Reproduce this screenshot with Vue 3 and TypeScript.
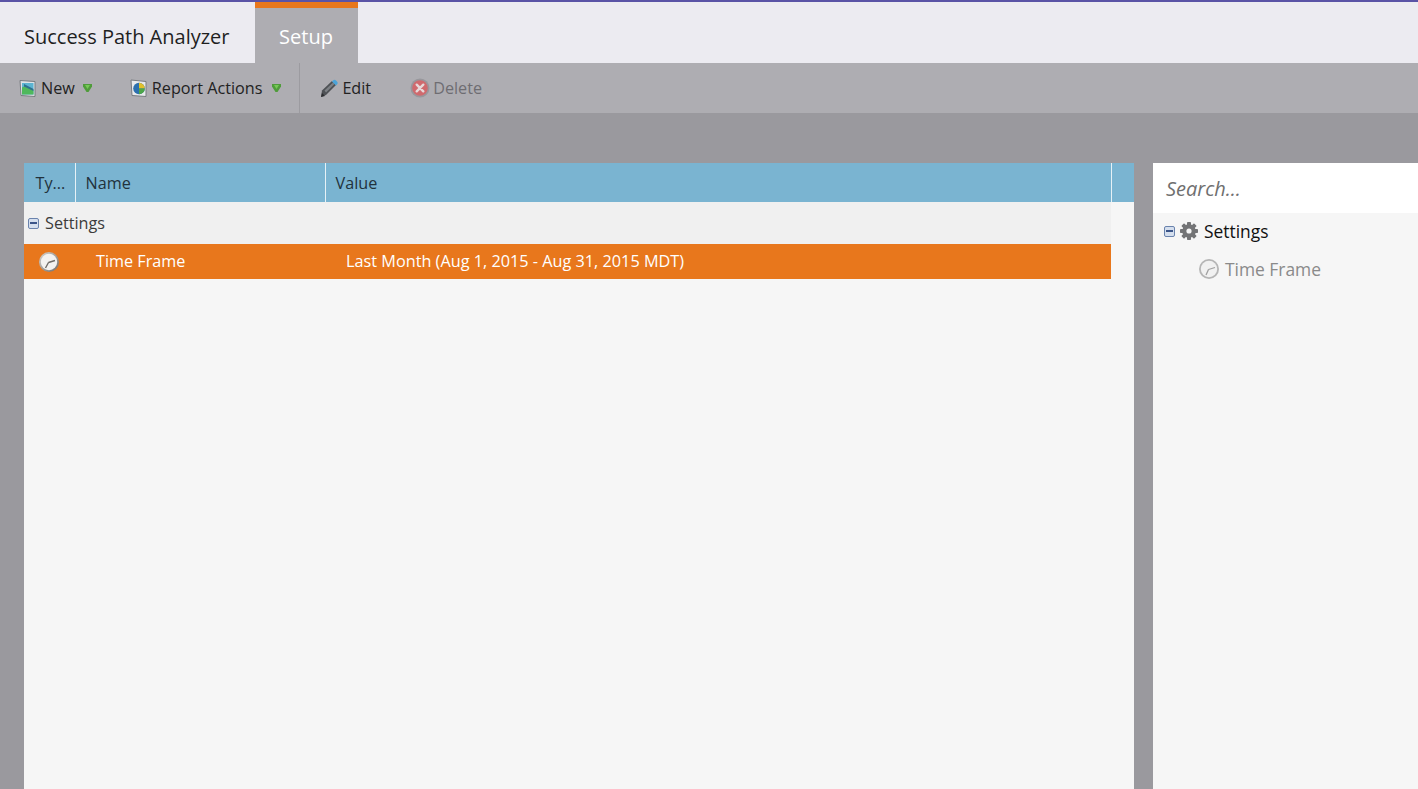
<script setup lang="ts">
interface Column {
  label: string;
  width: number;
}

const columns: Column[] = [
  { label: 'Ty...', width: 52 },
  { label: 'Name', width: 250 },
  { label: 'Value', width: 786 },
];
</script>

<template>
  <div class="page">
    <div class="tabs">
      <div class="tab">Success Path Analyzer</div>
      <div class="tab active">Setup</div>
    </div>

    <div class="toolbar">
      <div class="tool tool-new">
        <svg class="icon" width="18" height="19" viewBox="0 0 18 19">
          <path d="M1 1.500 16 2.500v15L2 16.500z" fill="#dfe3e6" stroke="#777b80" />
          <rect x="3" y="4" width="11.500" height="11.500" fill="#5cb4d2" />
          <path d="M3 8.500 7 6.500l7.500 5v4H3z" fill="#4fb85c" />
          <path d="M5 5l9.500 5v2L5 7.500z" fill="#2f6f8e" />
        </svg>
        <span>New</span>
        <svg class="caret caret-new" width="9" height="8" viewBox="0 0 9 8"><path d="M0 0h9v2.500L5.500 8h-2L0 2.500z" fill="#4f9c3a" /><path d="M2 1h5L4.500 5z" fill="#76c957" /></svg>
      </div>
      <div class="tool tool-report">
        <svg class="icon" width="18" height="19" viewBox="0 0 18 19">
          <path d="M1 1 16 2.500v15L2 16.500z" fill="#e8eaec" stroke="#777b80" />
          <circle cx="9" cy="9.500" r="5.800" fill="#2c70ae" />
          <path d="M9 9.500V3.700a5.800 5.800 0 0 1 5.800 5.800z" fill="#e0c02c" />
          <path d="M9 9.500h5.800A5.800 5.800 0 0 1 9 15.300z" fill="#4da648" />
        </svg>
        <span>Report Actions</span>
        <svg class="caret" width="9" height="8" viewBox="0 0 9 8"><path d="M0 0h9v2.500L5.500 8h-2L0 2.500z" fill="#4f9c3a" /><path d="M2 1h5L4.500 5z" fill="#76c957" /></svg>
      </div>
      <div class="divider"></div>
      <div class="tool tool-edit">
        <svg class="icon" width="20" height="20" viewBox="0 0 20 20">
          <path d="M3 12.500 13 3l4 4L7 17l-5 2z" fill="#4e5155" />
          <path d="M5.500 12.500 14 4.500l1.500 1.500-8.500 8.500z" fill="#7d8085" />
          <path d="M14 2.500a2 2 0 0 1 3 0l1 1a2 2 0 0 1 0 3l-1 1-4-4z" fill="#4aa3d8" />
          <path d="M2 19l1-4 3 3z" fill="#2c2d30" />
        </svg>
        <span>Edit</span>
      </div>
      <div class="tool tool-delete">
        <svg class="icon" width="20" height="20" viewBox="0 0 20 20">
          <circle cx="10" cy="10" r="9.500" fill="#98979c" />
          <circle cx="10" cy="10" r="7.800" fill="#cf6a6e" />
          <path d="M6.700 6.700l6.600 6.600m0-6.600-6.600 6.600" stroke="#e6d9d9" stroke-width="2.400" stroke-linecap="round" />
        </svg>
        <span>Delete</span>
      </div>
    </div>

    <div class="content">
      <div class="grid-panel">
        <div class="grid-head">
          <div
            v-for="col in columns"
            :key="col.label"
            class="head-cell"
            :style="{ width: col.width + 'px' }"
          >{{ col.label }}</div>
        </div>
        <div class="grid-body">
          <div class="group-row">
            <span class="collapse"></span>
            <span>Settings</span>
          </div>
          <div class="item-row">
            <div class="cell-type">
              <svg width="22" height="22" viewBox="0 0 22 22">
                <defs>
                  <linearGradient id="rim" x1="0" y1="0" x2="1" y2="1">
                    <stop offset="0" stop-color="#d8d6d2" />
                    <stop offset="1" stop-color="#6f6c68" />
                  </linearGradient>
                </defs>
                <circle cx="11" cy="11" r="10" fill="url(#rim)" />
                <circle cx="11" cy="11" r="8.200" fill="#f3f2f0" />
                <path d="M10.500 11.500 17 9.500M10.500 11.500 7.500 17" stroke="#6f6c68" stroke-width="1.400" />
              </svg>
            </div>
            <div class="cell-name">Time Frame</div>
            <div class="cell-value">Last Month (Aug 1, 2015 - Aug 31, 2015 MDT)</div>
          </div>
        </div>
      </div>

      <div class="side-panel">
        <div class="search">Search...</div>
        <div class="tree">
          <div class="tree-root">
            <span class="collapse"></span>
            <svg class="gear" width="20" height="20" viewBox="0 0 20 20">
              <g fill="#737476">
                <circle cx="10" cy="10" r="6.800" />
                <rect v-for="a in [0, 45, 90, 135]" :key="a" x="8" y="1" width="4" height="18" rx="0.800" :transform="`rotate(${a} 10 10)`" />
              </g>
              <circle cx="10" cy="10" r="2.600" fill="#f6f6f6" />
            </svg>
            <span>Settings</span>
          </div>
          <div class="tree-item">
            <svg width="22" height="22" viewBox="0 0 22 22">
              <circle cx="11" cy="11" r="10" fill="#b5b5b5" />
              <circle cx="11" cy="11" r="8.200" fill="#f1f1f1" />
              <path d="M10.500 11.500 17 9.500M10.500 11.500 8 17" stroke="#a0a0a0" stroke-width="1.300" />
            </svg>
            <span>Time Frame</span>
          </div>
        </div>
      </div>
    </div>
  </div>
</template>

<style>
html,
body {
  margin: 0;
  overflow: hidden;
}
</style>

<style scoped>
.page {
  display: flex;
  flex-direction: column;
  height: 789px;
  background: #9a999e;
  font-family: "Open Sans", "Liberation Sans", sans-serif;
  font-size: 16.2px;
  overflow: hidden;
}

.tabs {
  display: flex;
  height: 61px;
  background: #ecebf1;
  border-top: 2px solid #5a53a6;
  flex-shrink: 0;
}

.tab {
  padding: 0 25px 0 24px;
  font-size: 20px;
  line-height: 70px;
  color: #1f1f1f;
}

.tab.active {
  width: 103px;
  box-sizing: border-box;
  padding: 0;
  text-align: center;
  background: #aeadb2;
  border-top: 6px solid #e8771c;
  line-height: 58px;
  color: #fff;
}

.toolbar {
  display: flex;
  align-items: center;
  height: 50px;
  background: #aeadb2;
  flex-shrink: 0;
  padding-left: 19px;
  box-sizing: border-box;
  color: #222;
}

.tool {
  display: flex;
  align-items: center;
  gap: 3px;
}

.tool-new {
  gap: 4px;
}

.caret {
  margin-left: 6px;
}

.caret-new {
  margin-left: 4px;
}

.tool-report {
  margin-left: 38px;
  gap: 4px;
}

.divider {
  width: 1px;
  height: 50px;
  background: #9c9ba0;
  margin-left: 18px;
}

.tool-edit {
  margin-left: 19px;
}

.tool-delete {
  margin-left: 39px;
  color: #6e6d72;
}

.content {
  display: flex;
  padding: 50px 0 0 24px;
  flex: 1;
  min-height: 0;
}

.grid-panel {
  width: 1110px;
  background: #f6f6f6;
  flex-shrink: 0;
}

.grid-head {
  display: flex;
  height: 39px;
  background: #7ab4d1;
  color: #22323c;
}

.head-cell {
  box-sizing: border-box;
  padding-left: 9.500px;
  line-height: 41px;
  border-right: 1px solid #e6f1f6;
  flex-shrink: 0;
}

.head-cell:first-child {
  padding-left: 11.500px;
}

.grid-body {
  width: 1087px;
}

.group-row {
  display: flex;
  align-items: center;
  gap: 6px;
  height: 42px;
  padding-left: 4px;
  background: #f0f0f0;
  color: #3b3b3b;
}

.collapse {
  position: relative;
  width: 11px;
  height: 11px;
  box-sizing: border-box;
  border: 1px solid #6a83ad;
  border-radius: 2px;
  background: #d5dfee;
  flex-shrink: 0;
}

.collapse::after {
  content: "";
  position: absolute;
  left: 1px;
  right: 1px;
  top: 3px;
  height: 2px;
  background: #3a5488;
}

.item-row {
  display: flex;
  align-items: center;
  height: 33px;
  padding-bottom: 2px;
  background: #e8771c;
  color: #fff;
}

.cell-type {
  display: flex;
  justify-content: center;
  width: 50px;
  padding-top: 2px;
}

.cell-name {
  width: 250px;
  padding-left: 22px;
  box-sizing: border-box;
}

.cell-value {
  padding-left: 22px;
  font-size: 16.250px;
}

.side-panel {
  width: 265px;
  margin-left: 19px;
  background: #f6f6f6;
  flex-shrink: 0;
}

.search {
  height: 50px;
  padding-left: 13px;
  background: #fff;
  font-size: 20px;
  font-style: italic;
  line-height: 51px;
  color: #6f6f6f;
}

.tree {
  padding-left: 11px;
}

.tree-root {
  display: flex;
  align-items: center;
  height: 36px;
  color: #111;
  font-size: 17.400px;
}

.tree-root .gear {
  margin-left: 4px;
  margin-right: 5px;
}

.tree-item {
  display: flex;
  align-items: center;
  gap: 5px;
  height: 40px;
  padding-left: 34px;
  color: #8a8a8a;
  font-size: 17.400px;
}
</style>
